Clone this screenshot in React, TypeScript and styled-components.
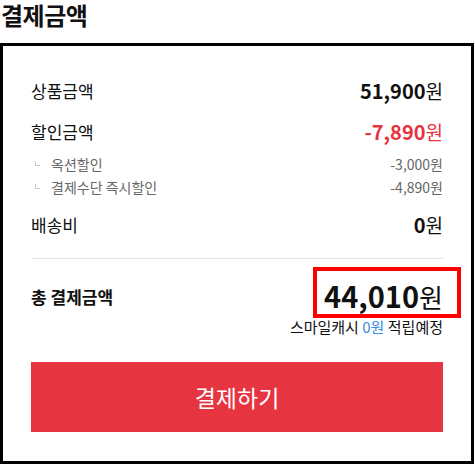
import React from 'react';
import styled, { createGlobalStyle } from 'styled-components';

const GlobalStyle = createGlobalStyle`
  * { box-sizing: border-box; }
  body {
    margin: 0;
    background: #fff;
    font-family: 'Noto Sans CJK KR', 'Noto Sans', sans-serif;
    color: #111;
  }
`;

const discounts = [
  { label: '옥션할인', amount: '-3,000' },
  { label: '결제수단 즉시할인', amount: '-4,890' },
];

const App: React.FC = () => {
  return (
    <>
      <GlobalStyle />
      <Wrapper>
        <Title>결제금액</Title>
        <Panel>
          <Summary>
            <Row>
              <Label>상품금액</Label>
              <Price>
                <Num>51,900</Num>원
              </Price>
            </Row>
            <Row $gap={17}>
              <Label>할인금액</Label>
              <Price $red>
                <Num>-7,890</Num>원
              </Price>
            </Row>
            <SubList>
              {discounts.map((d) => (
                <SubRow key={d.label}>
                  <SubLabel>
                    <Corner />
                    {d.label}
                  </SubLabel>
                  <span>{d.amount}원</span>
                </SubRow>
              ))}
            </SubList>
            <Row $gap={14}>
              <Label>배송비</Label>
              <Price>
                <Num>0</Num>원
              </Price>
            </Row>
          </Summary>
          <Total>
            <TotalRow>
              <TotalLabel>총 결제금액</TotalLabel>
              <TotalPrice>
                <TotalNum>44,010</TotalNum>원
                <Highlight />
              </TotalPrice>
            </TotalRow>
            <Cash>
              스마일캐시 <CashValue>0원</CashValue> 적립예정
            </Cash>
            <PayButton>결제하기</PayButton>
          </Total>
        </Panel>
      </Wrapper>
    </>
  );
};

const Wrapper = styled.div`
  width: 474px;
`;

const Title = styled.h2`
  margin: 0;
  height: 43px;
  padding-left: 1px;
  font-size: 24px;
  font-weight: 700;
  line-height: 30px;
  letter-spacing: -0.5px;
`;

const Panel = styled.div`
  border: 3px solid #000;
  padding: 32px 28px 29px 28px;
`;

const Summary = styled.div`
  padding-bottom: 22px;
  border-bottom: 1px solid #e5e5e5;
`;

const Row = styled.div<{ $gap?: number }>`
  display: flex;
  justify-content: space-between;
  align-items: center;
  height: 24px;
  margin-top: ${(p) => p.$gap || 0}px;
`;

const Label = styled.span`
  font-size: 17px;
  color: #111;
`;

const Price = styled.span<{ $red?: boolean }>`
  font-size: 19px;
  color: ${(p) => (p.$red ? '#e8323e' : '#111')};
`;

const Num = styled.b`
  font-weight: 700;
  font-size: 20px;
`;

const SubList = styled.div`
  margin-top: 9px;
`;

const SubRow = styled.div`
  display: flex;
  justify-content: space-between;
  align-items: center;
  height: 23px;
  font-size: 14px;
  color: #666;
`;

const SubLabel = styled.span`
  display: flex;
  align-items: center;
`;

const Corner = styled.i`
  display: inline-block;
  width: 5px;
  height: 5px;
  margin: 0 11px 1px 4px;
  border-left: 1px solid #c8c8c8;
  border-bottom: 1px solid #c8c8c8;
`;

const Total = styled.div`
  padding-top: 17px;
`;

const TotalRow = styled.div`
  display: flex;
  justify-content: space-between;
  align-items: center;
  height: 40px;
`;

const TotalLabel = styled.span`
  font-size: 17px;
  font-weight: 700;
`;

const TotalPrice = styled.span`
  position: relative;
  font-size: 26px;
  line-height: 40px;
`;

const TotalNum = styled.b`
  font-size: 29px;
  font-weight: 700;
`;

const Highlight = styled.span`
  position: absolute;
  top: -8px;
  bottom: -1px;
  left: -11px;
  right: -18px;
  border: 4px solid #ff0000;
  pointer-events: none;
`;

const Cash = styled.div`
  height: 22px;
  line-height: 22px;
  text-align: right;
  font-size: 15px;
  color: #111;
`;

const CashValue = styled.span`
  color: #3b8ee6;
`;

const PayButton = styled.button`
  display: block;
  width: 100%;
  height: 70px;
  margin-top: 24px;
  border: none;
  background: #e63540;
  color: #fff;
  font-family: inherit;
  font-size: 23px;
  cursor: pointer;
`;

export default App;
